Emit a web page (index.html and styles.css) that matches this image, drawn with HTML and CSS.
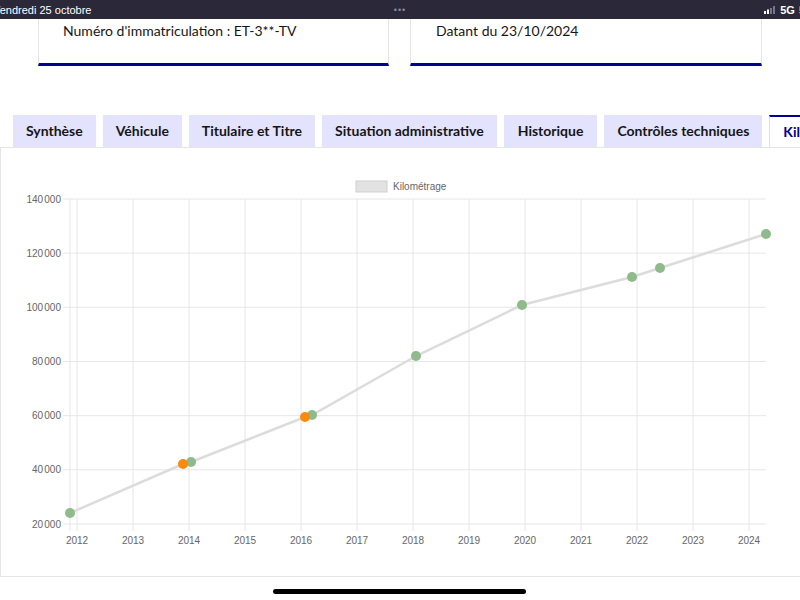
FILE: index.html
```html
<!DOCTYPE html>
<html lang="fr">
<head>
    <meta charset="UTF-8">
    <meta name="viewport" content="width=device-width, initial-scale=1.0">
    <title>Historique du kilométrage</title>
    <link rel="stylesheet" href="styles.css">
</head>
<body>
    <div class="status-bar">
        <span class="status-date">Vendredi 25 octobre</span>
        <span class="status-dots">&bull;&bull;&bull;</span>
        <span class="status-right">
            <svg class="signal" width="12" height="8" viewBox="0 0 12 8">
                <rect x="0" y="5" width="2" height="3" fill="#fff"/>
                <rect x="3" y="3.5" width="2" height="4.5" fill="#fff"/>
                <rect x="6" y="2" width="2" height="6" fill="#77758a"/>
                <rect x="9" y="0" width="2" height="8" fill="#77758a"/>
            </svg>
            <span>5G</span>
            <span>5</span>
        </span>
    </div>

    <div class="cards">
        <div class="card"><p>Numéro d'immatriculation : ET-3**-TV</p></div>
        <div class="card"><p>Datant du 23/10/2024</p></div>
    </div>

    <div class="tabs">
        <button class="tab">Synthèse</button>
        <button class="tab">Véhicule</button>
        <button class="tab">Titulaire et Titre</button>
        <button class="tab">Situation administrative</button>
        <button class="tab">Historique</button>
        <button class="tab">Contrôles techniques</button>
        <button class="tab active">Kilométrage</button>
    </div>

    <div class="panel">
        <svg class="chart" width="800" height="428" viewBox="1 148 800 428">
            <!-- legend -->
            <rect x="356" y="181" width="31" height="11" fill="#e2e2e2" stroke="#d0d0d0"/>
            <text class="legend" x="393" y="190">Kilométrage</text>

            <!-- grid -->
            <g class="grid">
                <line x1="63" y1="199" x2="766" y2="199"/>
                <line x1="63" y1="253.2" x2="766" y2="253.2"/>
                <line x1="63" y1="307.3" x2="766" y2="307.3"/>
                <line x1="63" y1="361.5" x2="766" y2="361.5"/>
                <line x1="63" y1="415.7" x2="766" y2="415.7"/>
                <line x1="63" y1="469.8" x2="766" y2="469.8"/>
                <line x1="63" y1="524" x2="766" y2="524"/>
                <line x1="70" y1="199" x2="70" y2="531"/>
                <line x1="77" y1="199" x2="77" y2="531"/>
                <line x1="133" y1="199" x2="133" y2="531"/>
                <line x1="189" y1="199" x2="189" y2="531"/>
                <line x1="245" y1="199" x2="245" y2="531"/>
                <line x1="301" y1="199" x2="301" y2="531"/>
                <line x1="357" y1="199" x2="357" y2="531"/>
                <line x1="413" y1="199" x2="413" y2="531"/>
                <line x1="469" y1="199" x2="469" y2="531"/>
                <line x1="525" y1="199" x2="525" y2="531"/>
                <line x1="581" y1="199" x2="581" y2="531"/>
                <line x1="637" y1="199" x2="637" y2="531"/>
                <line x1="693" y1="199" x2="693" y2="531"/>
                <line x1="749" y1="199" x2="749" y2="531"/>
            </g>

            <!-- y labels -->
            <g class="tick y-tick">
                <text x="61" y="202.5">140<tspan class="nsp">&#8239;</tspan>000</text>
                <text x="61" y="256.7">120<tspan class="nsp">&#8239;</tspan>000</text>
                <text x="61" y="310.8">100<tspan class="nsp">&#8239;</tspan>000</text>
                <text x="61" y="365">80<tspan class="nsp">&#8239;</tspan>000</text>
                <text x="61" y="419.2">60<tspan class="nsp">&#8239;</tspan>000</text>
                <text x="61" y="473.3">40<tspan class="nsp">&#8239;</tspan>000</text>
                <text x="61" y="527.5">20<tspan class="nsp">&#8239;</tspan>000</text>
            </g>

            <!-- x labels -->
            <g class="tick x-tick">
                <text x="77" y="544">2012</text>
                <text x="133" y="544">2013</text>
                <text x="189" y="544">2014</text>
                <text x="245" y="544">2015</text>
                <text x="301" y="544">2016</text>
                <text x="357" y="544">2017</text>
                <text x="413" y="544">2018</text>
                <text x="469" y="544">2019</text>
                <text x="525" y="544">2020</text>
                <text x="581" y="544">2021</text>
                <text x="637" y="544">2022</text>
                <text x="693" y="544">2023</text>
                <text x="749" y="544">2024</text>
            </g>

            <!-- data -->
            <polyline class="km-line" points="70,513 183,464 191,462 305,417 312,415 416,356 522,305 632,277 660,268 766,234"/>
            <g class="point ok">
                <circle cx="70" cy="513" r="5"/>
                <circle cx="191" cy="462" r="5"/>
                <circle cx="312" cy="415" r="5"/>
                <circle cx="416" cy="356" r="5"/>
                <circle cx="522" cy="305" r="5"/>
                <circle cx="632" cy="277" r="5"/>
                <circle cx="660" cy="268" r="5"/>
                <circle cx="766" cy="234" r="5"/>
            </g>
            <g class="point warn">
                <circle cx="183" cy="464" r="5"/>
                <circle cx="305" cy="417" r="5"/>
            </g>
        </svg>
    </div>

    <div class="home-indicator"></div>
</body>
</html>
```

FILE: styles.css
```css
html, body {
    margin: 0;
    padding: 0;
    height: 100%;
    overflow: hidden;
    background-color: #fff;
}
body {
    font-family: Lato, "Noto Sans", sans-serif;
    color: #161616;
}

/* iPad status bar */
.status-bar {
    height: 19px;
    background-color: #2b2939;
    color: #fff;
    font-family: "Liberation Sans", Arial, sans-serif;
    font-size: 11px;
    display: grid;
    grid-template-columns: 1fr auto 1fr;
    align-items: center;
    white-space: nowrap;
}
.status-date {
    margin-left: -7px;
}
.status-dots {
    color: #8c8a9c;
    font-size: 9px;
    letter-spacing: 1px;
}
.status-right {
    justify-self: end;
    margin-right: -5px;
    display: flex;
    align-items: center;
    gap: 4px;
    font-weight: bold;
}

/* cards */
.cards {
    display: flex;
    gap: 21px;
    padding-left: 38px;
}
.card {
    width: 351px;
    border: 1px solid #e5e5e5;
    border-top: none;
    border-bottom: 3px solid #000091;
    padding: 2px 24px 22px;
    box-sizing: border-box;
    height: 47px;
}
.card:last-child {
    width: 352px;
    padding-left: 25px;
}
.card p {
    margin: 0;
    font-size: 14px;
    line-height: 20px;
}

/* tabs */
.tabs {
    display: flex;
    gap: 7px;
    padding-left: 13px;
    margin-top: 49px;
    white-space: nowrap;
}
.tab {
    flex-shrink: 0;
    height: 32px;
    padding: 0 13px 1px;
    border: none;
    background-color: #e3e3fd;
    color: #161616;
    font-family: inherit;
    font-size: 14px;
    font-weight: bold;
    cursor: pointer;
}
.tab:nth-child(5) {
    padding: 0 14px 1px;
}
.tab.active {
    background-color: #fff;
    border-top: 2px solid #000091;
    border-left: 1px solid #e0e0e0;
    color: #000091;
}

/* chart panel */
.panel {
    width: 820px;
    border: 1px solid #e5e5e5;
    border-right: none;
}
.chart {
    display: block;
}
.chart .grid line {
    stroke: #e6e6e6;
    stroke-width: 1;
}
.chart text {
    font-family: "Liberation Sans", Arial, sans-serif;
    font-size: 10px;
    fill: #666;
}
.chart .nsp {
    font-size: 6px;
}
.chart .y-tick text {
    text-anchor: end;
}
.chart .x-tick text {
    text-anchor: middle;
}
.km-line {
    fill: none;
    stroke: #dcdcdc;
    stroke-width: 2.5;
}
.point.ok circle {
    fill: #8fba8c;
}
.point.warn circle {
    fill: #fb8a0e;
}

.home-indicator {
    position: fixed;
    left: 273px;
    bottom: 6px;
    width: 253px;
    height: 5px;
    border-radius: 3px;
    background-color: #000;
}
```
